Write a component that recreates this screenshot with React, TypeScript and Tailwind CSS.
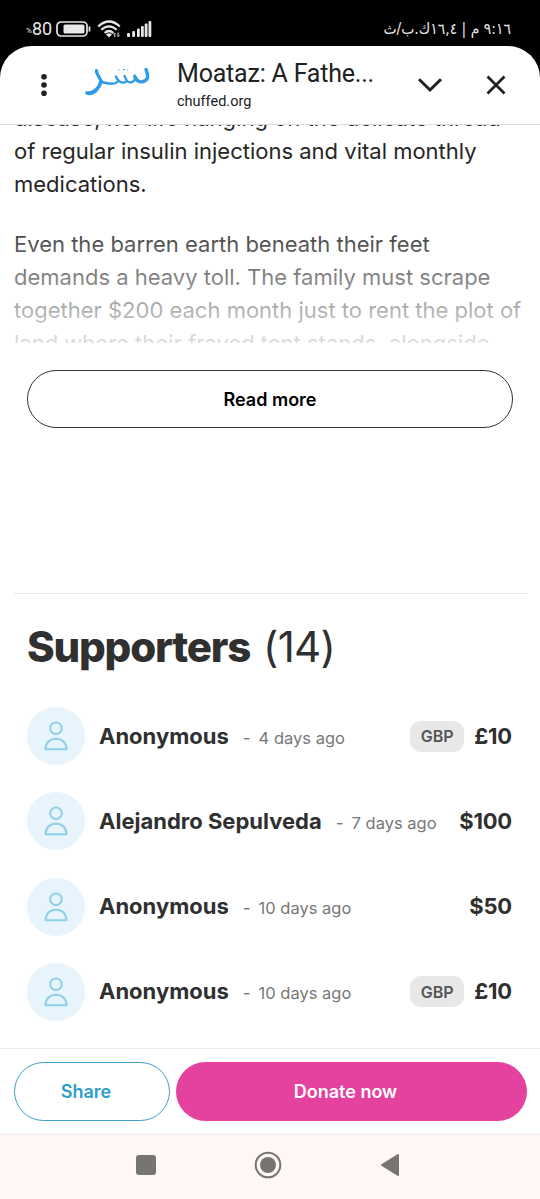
import { FC } from "react";

type Supporter = {
  name: string;
  time: string;
  amount: string;
  currency?: string;
};

const supporters: Supporter[] = [
  { name: "Anonymous", time: "4 days ago", amount: "£10", currency: "GBP" },
  { name: "Alejandro Sepulveda", time: "7 days ago", amount: "$100" },
  { name: "Anonymous", time: "10 days ago", amount: "$50" },
  { name: "Anonymous", time: "10 days ago", amount: "£10", currency: "GBP" },
];

const StatusBar: FC = () => (
  <div className="flex h-[46px] shrink-0 items-start justify-between pt-[18px] pr-[29px] pl-[26px] text-[#e8e8e8]">
    <div className="flex h-[22px] items-center">
      <span className="mt-[3px] w-[6px] font-['Roboto',sans-serif] text-[8px] leading-none">%</span>
      <span className="w-[20px] font-['Roboto',sans-serif] text-[18px] leading-none">80</span>
      <svg className="ml-[4px] shrink-0" width="36" height="16" viewBox="0 0 36 16" fill="none">
        <rect x="1" y="1" width="30" height="14" rx="4" stroke="currentColor" strokeWidth="1.7" />
        <rect x="7.5" y="3.5" width="21" height="9" rx="1.5" fill="currentColor" />
        <path d="M33.5 5.5v5" stroke="currentColor" strokeWidth="1.8" />
      </svg>
      <svg className="ml-[5px] shrink-0" width="25" height="18" viewBox="0 0 25 18" fill="none">
        <g stroke="currentColor" strokeWidth="2.2">
          <path d="M1.2 6.5Q12 -3.5 22.8 6.5" />
          <path d="M4.3 9.8Q12 2.8 19.7 9.8" />
          <path d="M7.7 13Q12 9 16.3 13" />
        </g>
        <path d="M9 14.5Q12 12 15 14.5L12 17.5z" fill="currentColor" />
        <path d="M17.8 17v-4m-1.4 1.5 1.4-1.6M21 12.5v4m1.4-1.5L21 16.8" stroke="currentColor" />
      </svg>
      <svg className="ml-[5px] shrink-0" width="26" height="16" viewBox="0 0 26 16" fill="currentColor">
        <rect x="0" y="12" width="3" height="4" rx="1" />
        <rect x="5.2" y="10" width="2.8" height="6" rx="1" />
        <rect x="10" y="7.5" width="2.8" height="8.5" rx="1" />
        <rect x="14" y="5" width="2.8" height="11" rx="1" />
        <rect x="17.7" y="2.5" width="2.8" height="13.5" rx="1" />
        <rect x="21.5" y="0" width="2.8" height="16" rx="1" />
      </svg>
    </div>
    <span
      dir="rtl"
      className="font-['DejaVu_Sans_Condensed','DejaVu_Sans',sans-serif] text-[15.5px] leading-[22px] font-stretch-condensed whitespace-nowrap"
    >
      ٩:١٦ م | ١٦,٤ك.ب/ث
    </span>
  </div>
);

const Logo: FC = () => (
  <svg className="mt-[19px] ml-[33px] shrink-0" width="68" height="34" viewBox="0 0 68 34" fill="none">
    <g stroke="#2d9be5" strokeLinecap="round" strokeLinejoin="round">
      <path d="M62 4.5C63.5 8 65 13 61.5 15.5C57.5 18 53 17 51 12" strokeWidth="3.4" />
      <path d="M50.5 10.5C52.5 17 46.5 19 43 16L40.5 11" strokeWidth="2.3" />
      <path d="M43 16C40 19 34.5 18 32 11.5" strokeWidth="2.3" />
      <path d="M34 16.5C31 19.5 26 19.5 18 17" strokeWidth="2.4" />
      <path d="M12.5 5.5C12 9 16 12 17.2 16.5" strokeWidth="3.2" />
      <path d="M17.2 16.5C15 23 10 29.5 3 28" strokeWidth="3.8" />
      <path d="M34.5 5h.5M39.5 4.5h1M43.5 5h.3" strokeWidth="1.2" />
    </g>
  </svg>
);

const BrowserBar: FC = () => (
  <header className="flex h-[79px] shrink-0 items-start rounded-t-[32px] border-b border-[#dedede] bg-white text-[#202124]">
    <svg className="mt-[26px] ml-[37px] shrink-0" width="14" height="26" viewBox="0 0 14 26" fill="currentColor">
      <circle cx="7" cy="4.8" r="2.8" />
      <circle cx="7" cy="13" r="2.8" />
      <circle cx="7" cy="21.2" r="2.8" />
    </svg>
    <Logo />
    <div className="mt-[12px] ml-[25px] w-[240px] font-['Roboto',sans-serif]">
      <p className="text-[25px] leading-[32px] tracking-[-0.2px] whitespace-nowrap">Moataz: A Fathe...</p>
      <p className="mt-[2px] text-[14.5px] leading-[20px]">chuffed.org</p>
    </div>
    <svg className="mt-[31px] shrink-0" width="26" height="16" viewBox="0 0 26 16" fill="none">
      <path d="M2 2.2 13 13 24 2.2" stroke="currentColor" strokeWidth="3" />
    </svg>
    <svg className="mt-[29px] ml-[43px] shrink-0" width="20" height="20" viewBox="0 0 20 20" fill="none">
      <path d="M1.5 1.5 18.5 18.5M18.5 1.5 1.5 18.5" stroke="currentColor" strokeWidth="2.8" />
    </svg>
  </header>
);

const Story: FC = () => (
  <article className="relative h-[218px] shrink-0 overflow-hidden px-[14px] text-[22px] leading-[33px] whitespace-nowrap text-[#262626]">
    <p className="-mt-[23px]">
      disease, her life hanging on the delicate thread
      <br />
      of regular insulin injections and vital monthly
      <br />
      medications.
    </p>
    <p className="mt-[27px]">
      Even the barren earth beneath their feet
      <br />
      demands a heavy toll. The family must scrape
      <br />
      together $200 each month just to rent the plot of
      <br />
      land where their frayed tent stands, alongside
    </p>
    <div className="absolute inset-x-0 bottom-0 h-[132px] bg-linear-to-b from-white/0 to-white/85" />
  </article>
);

const Avatar: FC = () => (
  <div className="flex size-[58px] shrink-0 items-center justify-center rounded-full bg-[#e7f4fb]">
    <svg width="24" height="30" viewBox="0 0 24 30" fill="none" stroke="#8dcfe5" strokeWidth="2">
      <circle cx="12" cy="7.3" r="5.8" />
      <path d="M1.5 28.3C1.5 21.5 6 17.7 12 17.7S22.5 21.5 22.5 28.3z" strokeLinejoin="round" />
    </svg>
  </div>
);

const SupporterRow: FC<Supporter> = ({ name, time, amount, currency }) => (
  <li className="flex h-[58px] items-center">
    <Avatar />
    <div className="ml-[14px] flex items-baseline whitespace-nowrap">
      <span className="text-[22px] font-bold">{name}</span>
      <span className="ml-[14px] text-[17px] text-[#777]">-</span>
      <span className="ml-[8px] text-[16.5px] text-[#777]">{time}</span>
    </div>
    <div className="ml-auto flex items-center gap-[10px]">
      {currency ? (
        <span className="flex h-[31px] w-[54px] items-center justify-center rounded-[11px] bg-[#e8e8e8] text-[16px] font-semibold text-[#555]">
          {currency}
        </span>
      ) : null}
      <span className="text-[22px] font-bold tracking-[-0.2px]">{amount}</span>
    </div>
  </li>
);

const NavigationBar: FC = () => (
  <nav className="flex h-[65px] shrink-0 items-center border-t border-[#eee8e6] bg-[#fff7f4] pb-[5px] text-[#777572]">
    <div className="ml-[136px] size-[20px] rounded-[3px] bg-[#777572]" />
    <svg className="ml-[98px]" width="28" height="28" viewBox="0 0 28 28" fill="none">
      <circle cx="14" cy="14" r="12.3" stroke="currentColor" strokeWidth="2" />
      <circle cx="14" cy="14" r="8" fill="currentColor" />
    </svg>
    <svg className="ml-[98px]" width="20" height="24" viewBox="0 0 20 24" fill="currentColor">
      <path d="M2 12 18 2v20z" stroke="currentColor" strokeWidth="2" strokeLinejoin="round" />
    </svg>
  </nav>
);

const App: FC = () => {
  return (
    <div className="flex h-[1199px] w-[540px] flex-col overflow-hidden bg-black font-['Inter',sans-serif]">
      <StatusBar />
      <BrowserBar />
      <main className="flex min-h-0 flex-1 flex-col bg-white text-[#303030]">
        <Story />
        <button className="mx-[27px] mt-[27px] h-[58px] shrink-0 rounded-full border border-[#333] text-[18px] font-semibold text-black">
          Read more
        </button>
        <section className="mr-[13px] ml-[14px] mt-[165px] border-t border-[#e8e8e8] pr-[15px] pl-[13px]">
          <h2 className="mt-[25px] text-[42px] leading-[56px] font-extrabold tracking-[-1.2px] whitespace-nowrap">
            Supporters <span className="ml-[5px] font-normal tracking-[-0.7px]">(14)</span>
          </h2>
          <ul className="mt-[32px] flex flex-col gap-[27.3px]">
            {supporters.map((supporter, index) => (
              <SupporterRow key={index} {...supporter} />
            ))}
          </ul>
        </section>
      </main>
      <div className="flex h-[86px] shrink-0 gap-[6px] border-t border-[#ececec] bg-white pt-[13px] pr-[13px] pl-[14px] text-[18px] font-semibold">
        <button className="h-[59px] w-[156px] rounded-full border border-[#3d9fc6] pr-[12px] text-[#2d9fcb]">
          Share
        </button>
        <button className="h-[59px] flex-1 rounded-full bg-[#e5429f] pr-[12px] text-white">Donate now</button>
      </div>
      <NavigationBar />
    </div>
  );
};

export default App;
